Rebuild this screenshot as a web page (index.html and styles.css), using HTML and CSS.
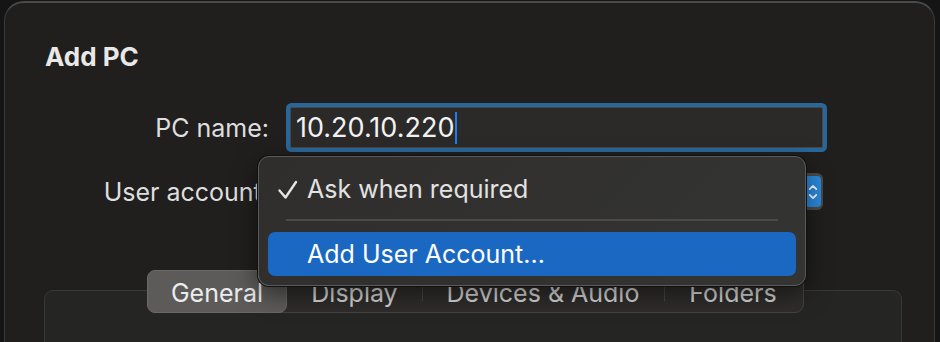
FILE: index.html
```html
<!DOCTYPE html>
<html lang="en">
<head>
  <meta charset="UTF-8">
  <title>Add PC</title>
  <link rel="stylesheet" href="styles.css">
</head>
<body>

  <div class="window">
    <h1>Add PC</h1>

    <div class="form">
      <label>PC name:</label>
      <div class="field">10.20.10.220<span class="caret"></span></div>

      <label>User account:</label>
      <div class="popup">
        <span class="value">Ask when required</span>
        <span class="stepper">
          <svg width="17" height="28" viewBox="0 0 17 28">
            <path d="M5 11 L8.5 7.5 L12 11 M5 17 L8.5 20.5 L12 17" fill="none" stroke="white" stroke-width="1.8" stroke-linecap="round" stroke-linejoin="round"/>
          </svg>
        </span>
      </div>
    </div>

    <div class="tabs">
      <div class="tab active">General</div>
      <div class="tab">Display</div>
      <div class="tab">Devices &amp; Audio</div>
      <div class="tab">Folders</div>
    </div>
    <div class="panel"></div>

    <!-- open popup menu -->
    <div class="menu">
      <div class="item">
        <svg class="check" width="22" height="22" viewBox="0 0 22 22">
          <path d="M2.5 11.5 L8.5 18.5 L19 3" fill="none" stroke="#e4e4e4" stroke-width="2.4" stroke-linecap="round" stroke-linejoin="round"/>
        </svg>
        Ask when required
      </div>
      <div class="sep"></div>
      <div class="item selected">Add User Account...</div>
    </div>
  </div>

</body>
</html>
```

FILE: styles.css
```css
* {
  margin: 0;
  padding: 0;
  box-sizing: border-box;
  font-family: 'Inter', 'Liberation Sans', sans-serif;
}

body {
  background: #151515;
  height: 342px;
  overflow: hidden;
}

.window {
  position: relative;
  margin: 1px 0 0 4px;
  width: 931px;
  height: 341px;
  overflow: hidden;
  background: #201f1e;
  border-top: 2px solid #4a4a4a;
  border-left: 1px solid #3a3a3a;
  border-right: 1px solid #3a3a3a;
  border-radius: 20px 20px 0 0;
  padding: 0 32px 0 39px;
  color: #e2e2e2;
}

h1 {
  font-size: 26px;
  font-weight: 700;
  margin: 39px 0 0 1px;
  line-height: 30px;
  color: #e8e8e8;
}

.form {
  display: grid;
  grid-template-columns: 225px 533px;
  column-gap: 21px;
  row-gap: 25px;
  margin-top: 35px;
  align-items: center;
}

.form label {
  text-align: right;
  font-size: 25px;
  color: #dedede;
  white-space: nowrap;
}

.field {
  height: 41px;
  background: #2b2a28;
  border: 1px solid #474747;
  box-shadow: 0 0 0 4px #29679b;
  border-radius: 2px;
  font-size: 27px;
  line-height: 37px;
  padding-left: 5px;
  color: #f2f2f2;
  display: flex;
  align-items: center;
}

.caret {
  display: inline-block;
  width: 2px;
  height: 32px;
  background: #1e7cf2;
  margin-left: 1px;
}

.popup {
  height: 37px;
  background: #4a4a49;
  border-radius: 6px;
  display: flex;
  align-items: center;
  justify-content: space-between;
  padding: 0 2px 0 12px;
  font-size: 25px;
}

/* covered by the open menu */
.popup .value {
  visibility: hidden;
}

.stepper {
  width: 16px;
  height: 31px;
  background: #2a88dc;
  border-radius: 4px;
  display: flex;
  align-items: center;
  justify-content: center;
}

.tabs {
  position: relative;
  z-index: 1;
  display: flex;
  margin: 60px 0 0 103px;
  width: 657px;
  height: 43px;
  background: #2e2d2b;
  border: 1px solid #444342;
  border-radius: 9px;
}

.tab {
  display: flex;
  align-items: center;
  justify-content: center;
  font-size: 25px;
  color: #d8d8d8;
  position: relative;
  padding-top: 2px;
}

.tab:nth-child(1) { width: 140px; }
.tab:nth-child(2) { width: 135px; }
.tab:nth-child(3) { width: 242px; }
.tab:nth-child(4) { width: 138px; }

.tab + .tab::before {
  content: '';
  position: absolute;
  left: 0;
  top: 11px;
  bottom: 11px;
  width: 1px;
  background: #474645;
}

.tab.active {
  background: #5c5b5a;
  border-radius: 8px;
  margin: -1px 0 -1px -1px;
  height: 43px;
  color: #ececec;
  border: 1px solid #6a6968;
}

.tab.active + .tab::before {
  display: none;
}

.panel {
  margin-top: -23px;
  height: 80px;
  background: #252523;
  border: 1px solid #393837;
  border-radius: 9px;
}

.menu {
  position: absolute;
  left: 253px;
  top: 153px;
  width: 548px;
  height: 130px;
  background: linear-gradient(135deg, #2f2e2c, #343432);
  border: 1px solid #5a5a58;
  border-radius: 11px;
  box-shadow: 0 0 0 1px #111, 0 8px 24px rgba(0, 0, 0, 0.5);
  padding: 10px 9px;
  z-index: 2;
}

.item {
  height: 44px;
  display: flex;
  align-items: center;
  padding-left: 39px;
  font-size: 25px;
  color: #e2e2e2;
  position: relative;
  border-radius: 7px;
}

.check {
  position: absolute;
  left: 9px;
  top: 12px;
}

.sep {
  height: 2px;
  background: #4b4a49;
  margin: 8px 18px 11px 18px;
}

.item.selected {
  background: #1b68c3;
  color: #ffffff;
}
```
